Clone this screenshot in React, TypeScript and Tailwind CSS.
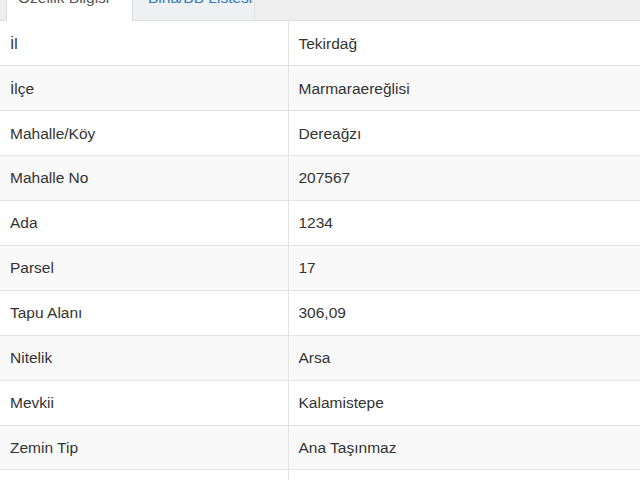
const rows: [string, string][] = [
  ["İl", "Tekirdağ"],
  ["İlçe", "Marmaraereğlisi"],
  ["Mahalle/Köy", "Dereağzı"],
  ["Mahalle No", "207567"],
  ["Ada", "1234"],
  ["Parsel", "17"],
  ["Tapu Alanı", "306,09"],
  ["Nitelik", "Arsa"],
  ["Mevkii", "Kalamistepe"],
  ["Zemin Tip", "Ana Taşınmaz"],
  ["", ""],
];

export default function App() {
  return (
    <div className="w-[640px] h-[480px] overflow-hidden bg-white text-[#333] font-['Liberation_Sans',Arial,sans-serif] text-[15.5px]">
      <ul className="flex h-[21px] bg-[#eeeeee] border-b border-[#dddddd]">
        <li className="ml-[6px] w-[127px] h-[21px] bg-white border-x border-[#dddddd] overflow-hidden">
          <span className="block -mt-[12px] pl-[11px] leading-[20px] text-[#555]">Özellik Bilgisi</span>
        </li>
        <li className="w-[122px] h-[20px] bg-[#eef0f2] border-r border-[#e2e2e2] overflow-hidden">
          <span className="block -mt-[12px] pl-[15px] leading-[20px] text-[#337ab7]">Bina/BB Listesi</span>
        </li>
      </ul>
      <table className="w-full border-collapse">
        <tbody>
          {rows.map(([label, value], i) => (
            <tr key={i} className={i % 2 === 1 ? "bg-[#f9f9f9]" : "bg-white"}>
              <td className="w-[288px] h-[44.9px] border-b border-r border-[#e3e3e3] pl-[10px] align-middle">
                {label}
              </td>
              <td className="h-[44.9px] border-b border-[#e3e3e3] pl-[10px] align-middle">{value}</td>
            </tr>
          ))}
        </tbody>
      </table>
    </div>
  );
}
